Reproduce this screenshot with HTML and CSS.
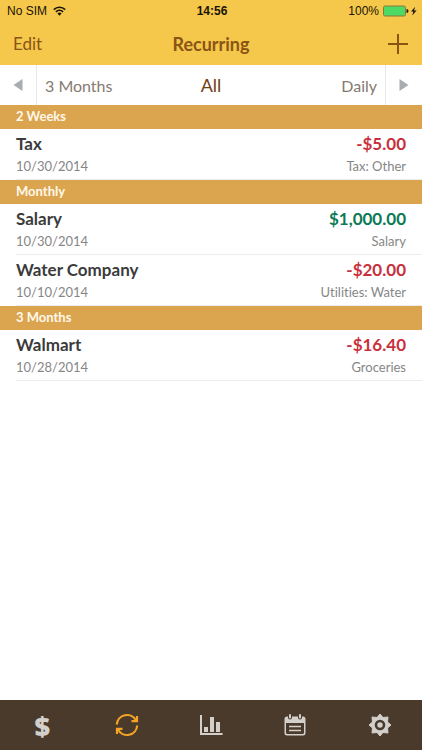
FILE: index.html
```html
<!DOCTYPE html>
<html lang="en">
<head>
    <meta charset="UTF-8">
    <meta name="viewport" content="width=device-width, initial-scale=1.0">
    <title>Recurring</title>
    <link rel="stylesheet" href="styles.css">
</head>
<body>
    <header class="top">
        <div class="status">
            <div class="carrier">
                <span>No SIM</span>
                <svg width="13" height="10" viewBox="0 0 13 10">
                    <path d="M0.8 3.6 A8.2 8.2 0 0 1 12.2 3.6" fill="none" stroke="#1a1405" stroke-width="1.6"/>
                    <path d="M2.9 5.8 A5.2 5.2 0 0 1 10.1 5.8" fill="none" stroke="#1a1405" stroke-width="1.6"/>
                    <path d="M6.5 9.8 L4.4 7.6 A3 3 0 0 1 8.6 7.6 Z" fill="#1a1405"/>
                </svg>
            </div>
            <span class="time">14:56</span>
            <div class="power">
                <span>100%</span>
                <svg width="34" height="12" viewBox="0 0 34 12">
                    <rect x="0.5" y="1" width="22" height="10" rx="1.5" fill="#4cd964" stroke="#8a7a35" stroke-width="1"/>
                    <path d="M23.5 4 a2 2 0 0 1 0 4 z" fill="#1a1405"/>
                    <path d="M32.2 1.8 L28 6.6 H30.4 L29.2 10.6 L33.6 5.4 H31 Z" fill="#1a1405"/>
                </svg>
            </div>
        </div>
        <div class="navbar">
            <button class="edit" type="button">Edit</button>
            <h1>Recurring</h1>
            <button class="add" type="button" aria-label="Add">
                <svg width="22" height="22" viewBox="0 0 22 22">
                    <path d="M11 1 V21 M1 11 H21" stroke="#8a5414" stroke-width="2"/>
                </svg>
            </button>
        </div>
    </header>

    <div class="filter">
        <button class="arrow prev" type="button" aria-label="Previous">
            <svg width="10" height="12" viewBox="0 0 10 12"><path d="M9.5 0 V12 L0.5 6 Z" fill="#a9acb2"/></svg>
        </button>
        <div class="periods">
            <button type="button">3 Months</button>
            <button class="current" type="button">All</button>
            <button type="button">Daily</button>
        </div>
        <button class="arrow next" type="button" aria-label="Next">
            <svg width="10" height="12" viewBox="0 0 10 12"><path d="M0.5 0 V12 L9.5 6 Z" fill="#a9acb2"/></svg>
        </button>
    </div>

    <main>
        <section>
            <h2>2 Weeks</h2>
            <ul>
                <li>
                    <div class="line"><span class="name">Tax</span><span class="amount expense">-$5.00</span></div>
                    <div class="line detail"><span>10/30/2014</span><span>Tax: Other</span></div>
                </li>
            </ul>
        </section>
        <section>
            <h2>Monthly</h2>
            <ul>
                <li>
                    <div class="line"><span class="name">Salary</span><span class="amount income">$1,000.00</span></div>
                    <div class="line detail"><span>10/30/2014</span><span>Salary</span></div>
                </li>
                <li>
                    <div class="line"><span class="name">Water Company</span><span class="amount expense">-$20.00</span></div>
                    <div class="line detail"><span>10/10/2014</span><span>Utilities: Water</span></div>
                </li>
            </ul>
        </section>
        <section>
            <h2>3 Months</h2>
            <ul>
                <li>
                    <div class="line"><span class="name">Walmart</span><span class="amount expense">-$16.40</span></div>
                    <div class="line detail"><span>10/28/2014</span><span>Groceries</span></div>
                </li>
            </ul>
        </section>
    </main>

    <nav class="tabs">
        <a class="dollar" href="#accounts" aria-label="Accounts">$</a>
        <a class="active" href="#recurring" aria-label="Recurring">
            <svg width="24" height="24" viewBox="0 0 24 24" fill="none" stroke="currentColor" stroke-width="2.2">
                <path d="M1.8 11.5 A10.2 10.2 0 0 1 21 7.5"/>
                <path d="M22.2 12.5 A10.2 10.2 0 0 1 3 16.5"/>
                <path d="M22 3 V8.2 H16.5"/>
                <path d="M2 21 V15.8 H7.5"/>
            </svg>
        </a>
        <a href="#reports" aria-label="Reports">
            <svg width="24" height="24" viewBox="0 0 24 24" fill="currentColor">
                <path d="M1 2 H3 V20 H23.5 V22 H1 Z"/>
                <rect x="5" y="14" width="4" height="5"/>
                <rect x="11" y="4" width="4" height="15"/>
                <rect x="17" y="9" width="4" height="10"/>
            </svg>
        </a>
        <a href="#calendar" aria-label="Calendar">
            <svg width="24" height="24" viewBox="0 0 24 24">
                <path d="M4 3.5 H20 A2.5 2.5 0 0 1 22.5 6 V20 A2.5 2.5 0 0 1 20 22.5 H4 A2.5 2.5 0 0 1 1.5 20 V6 A2.5 2.5 0 0 1 4 3.5 Z" fill="currentColor"/>
                <path d="M3 10 H21 V19.5 A1.5 1.5 0 0 1 19.5 21 H4.5 A1.5 1.5 0 0 1 3 19.5 Z" fill="#4a3a2b"/>
                <path d="M7 2 V4.5 M17 2 V4.5" stroke="#4a3a2b" stroke-width="4" stroke-linecap="round"/>
                <path d="M7 2 V4.5 M17 2 V4.5" stroke="currentColor" stroke-width="2" stroke-linecap="round"/>
                <path d="M6 13.5 H18 M6 17.5 H18" stroke="currentColor" stroke-width="1.5"/>
            </svg>
        </a>
        <a href="#settings" aria-label="Settings">
            <svg width="24" height="24" viewBox="0 0 24 24">
                <path d="M12 1 L15 4.5 L20 4 L19.5 9 L23 12 L19.5 15 L20 20 L15 19.5 L12 23 L9 19.5 L4 20 L4.5 15 L1 12 L4.5 9 L4 4 L9 4.5 Z" fill="currentColor" stroke="currentColor" stroke-width="1" stroke-linejoin="round"/>
                <circle cx="12" cy="12" r="4" fill="currentColor" stroke="#4a3a2b" stroke-width="2.6"/>
            </svg>
        </a>
    </nav>
</body>
</html>
```
FILE: styles.css
```css
* {
    box-sizing: border-box;
}
body {
    margin: 0;
    min-height: 100vh;
    display: flex;
    flex-direction: column;
    background-color: #fff;
    font-family: Lato, "Liberation Sans", sans-serif;
    font-variant-ligatures: none;
    color: #3b3b3b;
}
button {
    padding: 0;
    border: none;
    background: none;
    font-family: inherit;
    font-size: 16px;
    color: inherit;
    cursor: pointer;
}
svg {
    display: block;
}
.top {
    background-color: #f5c84b;
    color: #8a5414;
}
.status {
    display: grid;
    grid-template-columns: 1fr auto 1fr;
    align-items: center;
    height: 22px;
    padding: 0 5px 0 7px;
    font-family: "Liberation Sans", Arial, sans-serif;
    font-size: 12px;
    color: #1a1405;
}
.carrier, .power {
    display: flex;
    align-items: center;
    gap: 6px;
}
.power {
    justify-content: flex-end;
    gap: 4px;
}
.time {
    font-weight: bold;
}
.navbar {
    display: grid;
    grid-template-columns: 1fr auto 1fr;
    align-items: center;
    height: 43px;
    padding: 0 13px;
}
.navbar h1 {
    margin: 0;
    font-size: 18px;
    font-weight: bold;
}
.edit {
    justify-self: start;
    font-size: 17px;
}
.add {
    justify-self: end;
}
.filter {
    display: flex;
    height: 40px;
    color: #867a70;
}
.arrow {
    display: flex;
    align-items: center;
    justify-content: center;
    width: 37px;
}
.prev {
    border-right: 1px solid #e8e8e8;
}
.next {
    border-left: 1px solid #e8e8e8;
}
.periods {
    flex: 1;
    display: grid;
    grid-template-columns: 1fr auto 1fr;
    padding: 0 8px;
}
.periods button:first-child {
    justify-self: start;
}
.periods button:last-child {
    justify-self: end;
}
.periods .current {
    font-size: 18px;
    color: #6f4015;
}
main {
    flex: 1;
}
h2 {
    margin: 0;
    padding: 0 16px 2px;
    background-color: #dba550;
    color: #fff8ea;
    font-size: 13px;
    font-weight: bold;
    line-height: 22px;
}
ul {
    list-style-type: none;
    margin: 0;
    padding: 0 0 0 16px;
}
li {
    height: 51px;
    padding: 4px 16px 0 0;
    border-bottom: 1px solid #ececec;
}
.line {
    display: flex;
    justify-content: space-between;
    font-size: 17px;
    font-weight: bold;
    line-height: 22px;
}
.detail {
    font-size: 13px;
    font-weight: normal;
    color: #868686;
}
.expense {
    color: #c9303b;
}
.income {
    color: #0b7a55;
}
.tabs {
    display: flex;
    height: 50px;
    background-color: #4a3a2b;
}
.tabs a {
    flex: 1;
    display: flex;
    align-items: center;
    justify-content: center;
    color: #d3cfcb;
    text-decoration: none;
}
.tabs .active {
    color: #f5a325;
}
.tabs .dollar {
    font-family: "Open Sans", sans-serif;
    font-size: 27px;
    font-weight: 800;
}
```
